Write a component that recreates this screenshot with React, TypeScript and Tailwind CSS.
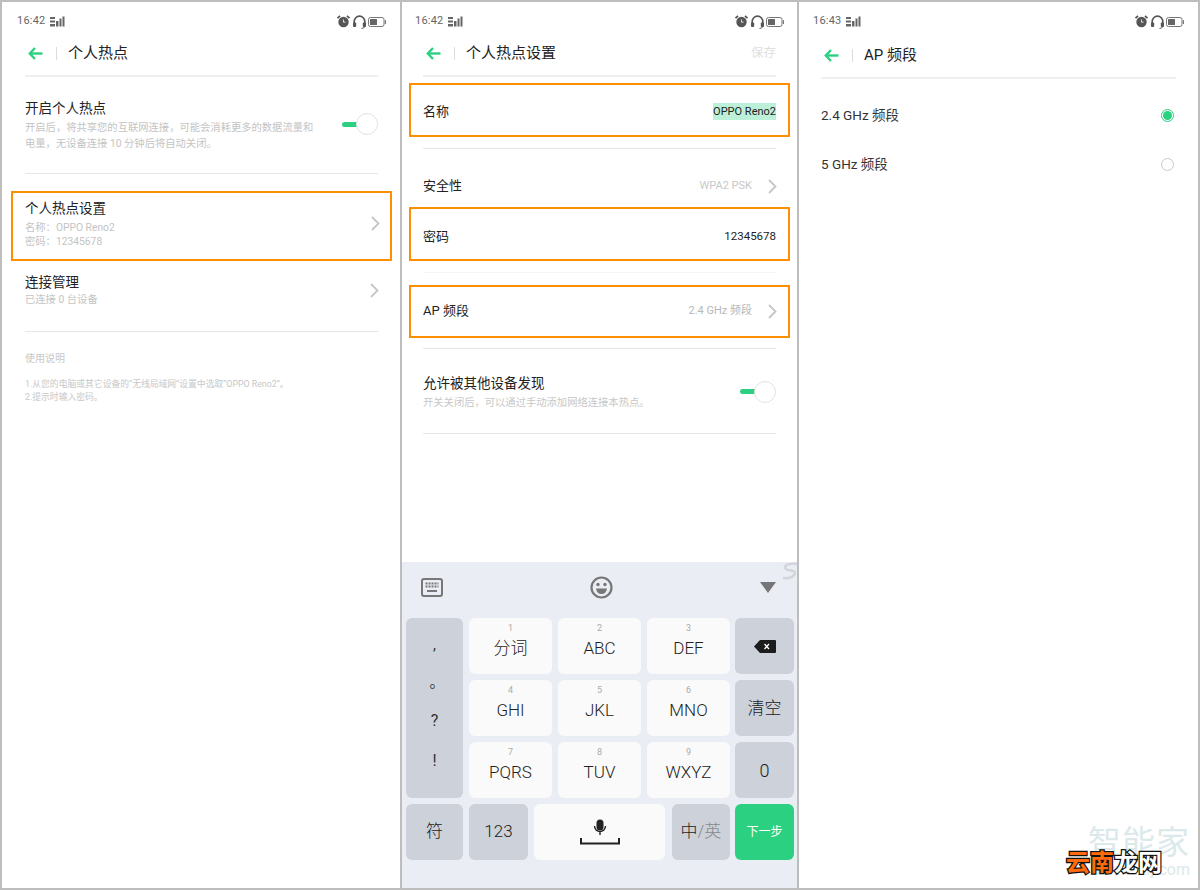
import type { ReactNode } from 'react'

const FONT = { fontFamily: 'Roboto, "Noto Sans CJK SC", sans-serif' }

function SignalIcon() {
  return (
    <svg width="15" height="11" viewBox="0 0 15 11" fill="#666">
      <rect x="0" y="1" width="5" height="2" />
      <rect x="0" y="4.5" width="5" height="2" />
      <rect x="0" y="8" width="5" height="2.5" />
      <rect x="6" y="5" width="2.5" height="5.5" />
      <rect x="9.5" y="2.5" width="2" height="8" />
      <rect x="12.5" y="0.5" width="2" height="10" />
    </svg>
  )
}

function AlarmIcon() {
  return (
    <svg width="13" height="13" viewBox="0 0 13 13">
      <circle cx="6.5" cy="7" r="5.2" fill="#555" />
      <path d="M0.5 3.2 L3 0.8 M12.5 3.2 L10 0.8" stroke="#555" strokeWidth="1.8" />
      <path d="M6.5 4.5 V7.2 H8.5" stroke="#ddd" strokeWidth="1" fill="none" />
    </svg>
  )
}

function HeadsetIcon() {
  return (
    <svg width="13" height="14" viewBox="0 0 13 14" fill="none">
      <path d="M1.2 9 V6.5 a5.3 5.3 0 0 1 10.6 0 V9" stroke="#555" strokeWidth="1.7" />
      <rect x="0" y="7.5" width="3.2" height="4.5" rx="1" fill="#555" />
      <rect x="9.8" y="7.5" width="3.2" height="4.5" rx="1" fill="#555" />
      <path d="M11.5 12 Q11 13.4 8.5 13.4" stroke="#555" strokeWidth="1" />
    </svg>
  )
}

function BatteryIcon() {
  return (
    <svg width="18" height="10" viewBox="0 0 18 10" fill="none">
      <rect x="0.5" y="0.5" width="15.5" height="9" rx="2" stroke="#777" />
      <rect x="2" y="2" width="7" height="6" rx="0.5" fill="#666" />
      <rect x="16.8" y="3" width="1.2" height="4" rx="0.5" fill="#777" />
    </svg>
  )
}

function StatusBar({ time }: { time: string }) {
  return (
    <div className="h-[38px] flex items-center justify-between pt-[1px]">
      <div className="flex items-center gap-[5px] text-[11px] text-[#666] tracking-[0.2px]">
        <span>{time}</span>
        <SignalIcon />
      </div>
      <div className="flex items-center">
        <AlarmIcon />
        <span className="ml-[3px] flex"><HeadsetIcon /></span>
        <span className="ml-[2px] flex"><BatteryIcon /></span>
      </div>
    </div>
  )
}

function BackArrow() {
  return (
    <svg width="15" height="13" viewBox="0 0 15 13" fill="none" stroke="#2bd181" strokeWidth="2.4">
      <path d="M14.5 6.5 H2" />
      <path d="M7 1 L1.8 6.5 L7 12" />
    </svg>
  )
}

function Header({ title, right, className }: { title: string; right?: string; className?: string }) {
  return (
    <div className={`h-[26px] flex items-center ${className ?? ''}`}>
      <span className="ml-[3px] flex"><BackArrow /></span>
      <span className="ml-[13px] w-[1px] h-[13px] bg-[#dcdcdc]" />
      <span className="ml-[11px] text-[15px] text-[#222]">{title}</span>
      {right && <span className="ml-auto text-[12.5px] text-[#dedede]">{right}</span>}
    </div>
  )
}

function Chevron() {
  return (
    <svg className="-mr-[1px]" width="9" height="15" viewBox="0 0 9 15" fill="none" stroke="#c6c6c6" strokeWidth="1.8">
      <path d="M1 1 L7.5 7.5 L1 14" />
    </svg>
  )
}

function Toggle({ className }: { className?: string }) {
  return (
    <div className={`flex items-center shrink-0 ${className ?? ''}`}>
      <div className="w-[15px] h-[5px] rounded-l-full bg-[#2bd181]" />
      <div className="w-[22px] h-[22px] rounded-full border border-[#e4e4e4] bg-white -ml-[1px]" />
    </div>
  )
}

function Divider({ className }: { className?: string }) {
  return <div className={`h-[1px] bg-[#e6e6e6] ${className ?? ''}`} />
}

function Radio({ checked }: { checked?: boolean }) {
  if (checked) {
    return (
      <div className="w-[13px] h-[13px] rounded-full border border-[#2bd181] flex items-center justify-center">
        <div className="w-[9px] h-[9px] rounded-full bg-[#2bd181]" />
      </div>
    )
  }
  return <div className="w-[13px] h-[13px] rounded-full border border-[#c8c8c8]" />
}

function HotspotPanel() {
  return (
    <div className="w-[398px] h-full shrink-0 bg-white pl-[15px] pr-[14px]">
      <StatusBar time="16:42" />
      <div className="ml-[8px] mr-[8px]">
        <Header title="个人热点" />
        <div className="mt-[9px] h-[2px] bg-[#efefef]" />

        <div className="mt-[21px] flex items-center justify-between">
          <div>
            <div className="h-[20px] leading-[20px] text-[13.5px] text-[#222]">开启个人热点</div>
            <div className="mt-[2px] text-[10.3px] leading-[16px] text-[#c4c4c4]">
              <div>开启后，将共享您的互联网连接，可能会消耗更多的数据流量和</div>
              <div>电量，无设备连接 10 分钟后将自动关闭。</div>
            </div>
          </div>
          <Toggle className="-mt-[2px]" />
        </div>
        <Divider className="mt-[21px]" />

        <div className="mt-[17px] -mx-[14px] h-[70px] border-2 border-[#ff8f00] pl-[12px] pr-[11px] flex items-center justify-between">
          <div className="-mt-[3px]">
            <div className="h-[16px] leading-[16px] text-[13.5px] text-[#222]">个人热点设置</div>
            <div className="mt-[5px] text-[10.3px] leading-[14px] text-[#c4c4c4]">
              <div>名称：OPPO Reno2</div>
              <div>密码：12345678</div>
            </div>
          </div>
          <span className="-mt-[6px] flex"><Chevron /></span>
        </div>

        <div className="mt-[12px] flex items-center justify-between">
          <div>
            <div className="h-[18px] leading-[18px] text-[13.5px] text-[#222]">连接管理</div>
            <div className="mt-[2px] h-[14px] leading-[14px] text-[10.3px] text-[#c4c4c4]">已连接 0 台设备</div>
          </div>
          <Chevron />
        </div>
        <Divider className="mt-[24px]" />

        <div className="mt-[20px] h-[14px] leading-[14px] text-[10px] text-[#c8c8c8]">使用说明</div>
        <div className="mt-[12px] text-[8.8px] leading-[13px] text-[#c8c8c8]">
          <div>1.从您的电脑或其它设备的“无线局域网”设置中选取“OPPO Reno2”。</div>
          <div>2.提示时输入密码。</div>
        </div>
      </div>
    </div>
  )
}

function Key({ digit, label }: { digit: string; label: string }) {
  return (
    <div className="rounded-md bg-[#fafafa] flex flex-col items-center pt-[5px]">
      <span className="h-[11px] leading-[11px] text-[9px] text-[#aaa]">{digit}</span>
      <span className="mt-[2px] h-[24px] leading-[24px] text-[17px] font-light text-[#222]">{label}</span>
    </div>
  )
}

function GrayKey({ children, className }: { children: ReactNode; className?: string }) {
  return (
    <div className={`rounded-md bg-[#cdd1da] flex items-center justify-center text-[17px] font-light text-[#222] ${className ?? ''}`}>
      {children}
    </div>
  )
}

function Keyboard() {
  return (
    <div className="relative mt-auto h-[326px] bg-[#eaedf3] pl-[4px] pr-[3px] overflow-hidden">
      <svg className="absolute right-0 top-0" width="14" height="18" viewBox="0 0 14 18" fill="none" stroke="#d2d6dc" strokeWidth="2.6">
        <path d="M15 2 Q3 1 2 5 Q2 8 8 8.5 Q14 9 11 13 Q8 17 0 16" />
      </svg>
      <div className="h-[56px] pb-[6px] flex items-center justify-between pl-[15px] pr-[18px]">
        <svg width="22" height="19" viewBox="0 0 22 19" fill="none">
          <rect x="1" y="1" width="20" height="17" rx="2" stroke="#777" strokeWidth="2" fill="#eaedf3" />
          <path d="M4.5 5.5 H17.5 M4.5 8.5 H17.5" stroke="#777" strokeWidth="2" strokeDasharray="2 1" />
          <path d="M6 13 H16" stroke="#777" strokeWidth="2" />
        </svg>
        <svg width="23" height="23" viewBox="0 0 23 23" fill="none">
          <circle cx="11.5" cy="11.5" r="10" stroke="#777" strokeWidth="2.2" />
          <circle cx="8" cy="8.5" r="1.7" fill="#777" />
          <circle cx="15" cy="8.5" r="1.7" fill="#777" />
          <path d="M6 12.5 H17 Q16 18 11.5 18 Q7 18 6 12.5 Z" fill="#777" />
        </svg>
        <svg width="16" height="11" viewBox="0 0 16 11">
          <path d="M0 0 H16 L8 11 Z" fill="#777" />
        </svg>
      </div>

      <div className="grid grid-cols-[57px_83px_83px_83px_58px] grid-rows-[56px_56px_56px] gap-[6px]">
        <div className="row-span-3 rounded-md bg-[#cdd1da] text-[#333] relative">
          <span className="absolute left-0 right-0 top-[17px] text-center text-[15px] leading-[20px]">,</span>
          <span className="absolute left-[5px] right-0 top-[54px] text-center text-[15px] leading-[20px]">。</span>
          <span className="absolute left-0 right-0 top-[91px] text-center text-[16px] leading-[24px]">?</span>
          <span className="absolute left-0 right-0 top-[131px] text-center text-[16px] leading-[24px]">!</span>
        </div>
        <Key digit="1" label="分词" />
        <Key digit="2" label="ABC" />
        <Key digit="3" label="DEF" />
        <GrayKey className="-ml-[1px]">
          <svg width="22" height="13" viewBox="0 0 22 13">
            <path d="M6 0 H21 a1 1 0 0 1 1 1 V12 a1 1 0 0 1 -1 1 H6 L0 6.5 Z" fill="#1c1c1c" />
            <path d="M10.5 4 L15 9 M15 4 L10.5 9" stroke="#fff" strokeWidth="1.3" />
          </svg>
        </GrayKey>
        <Key digit="4" label="GHI" />
        <Key digit="5" label="JKL" />
        <Key digit="6" label="MNO" />
        <GrayKey className="-ml-[1px] pt-[2px]">清空</GrayKey>
        <Key digit="7" label="PQRS" />
        <Key digit="8" label="TUV" />
        <Key digit="9" label="WXYZ" />
        <GrayKey className="-ml-[1px] pt-[1px] text-[18px]">0</GrayKey>
      </div>

      <div className="mt-[6px] h-[56px] flex">
        <GrayKey className="w-[57px]">符</GrayKey>
        <GrayKey className="ml-[6px] w-[59px]">123</GrayKey>
        <div className="ml-[6px] w-[131px] rounded-md bg-[#fafafa] flex items-center justify-center">
          <svg width="40" height="26" viewBox="0 0 40 26" fill="none">
            <rect x="16.5" y="0.5" width="7" height="11" rx="3.5" fill="#222" />
            <path d="M14.5 7 a5.5 5.5 0 0 0 11 0 M20 13 V16" stroke="#222" strokeWidth="1.4" />
            <path d="M1 19 V24.5 H39 V19" stroke="#222" strokeWidth="2" />
          </svg>
        </div>
        <GrayKey className="ml-[7px] w-[58px]">
          中<span className="text-[#888]">/英</span>
        </GrayKey>
        <div className="ml-[5px] w-[59px] rounded-md bg-[#2bd181] flex items-center justify-center text-[12px] text-white">
          下一步
        </div>
      </div>
    </div>
  )
}

function SettingsPanel() {
  return (
    <div className="w-[395px] h-full shrink-0 bg-white flex flex-col">
      <div className="px-[13px]">
        <StatusBar time="16:42" />
        <div className="mx-[8px]">
          <Header title="个人热点设置" right="保存" />
          <div className="mt-[9px] h-[2px] bg-[#efefef]" />

          <div className="mt-[6px] -mx-[14px] h-[54px] border-2 border-[#ff8f00] pl-[12px] pr-[12px] pt-[2px] flex items-center justify-between">
            <span className="pt-[1px] text-[13px] text-[#222]">名称</span>
            <span className="h-[17px] leading-[17px] bg-[#bdf0d8] text-[11px] text-[#222]">OPPO Reno2</span>
          </div>
          <Divider className="mt-[11px]" />

          <div className="mt-[15px] h-[43px] pt-[1px] flex items-center justify-between">
            <span className="text-[13px] text-[#222]">安全性</span>
            <span className="flex items-center gap-[16px] text-[11px] text-[#c8c8c8]">
              WPA2 PSK
              <Chevron />
            </span>
          </div>

          <div className="-mx-[14px] h-[54px] border-2 border-[#ff8f00] pl-[12px] pr-[12px] pt-[6px] flex items-center justify-between">
            <span className="text-[13px] text-[#222]">密码</span>
            <span className="text-[11.5px] text-[#222]">12345678</span>
          </div>
          <div className="mt-[11px] h-[1px] bg-[#f6f6f6]" />

          <div className="mt-[12px] -mx-[14px] h-[53px] border-2 border-[#ff8f00] pl-[12px] pr-[12px] flex items-center justify-between">
            <span className="pb-[1px] text-[13px] text-[#222]">AP 频段</span>
            <span className="flex items-center gap-[16px] text-[11px] text-[#b8b8b8]">
              2.4 GHz 频段
              <Chevron />
            </span>
          </div>
          <Divider className="mt-[10px]" />

          <div className="mt-[25px] flex items-center justify-between">
            <div>
              <div className="h-[18px] leading-[18px] text-[13.5px] text-[#222]">允许被其他设备发现</div>
              <div className="mt-[3px] h-[16px] leading-[16px] text-[10.3px] text-[#c8c8c8]">开关关闭后，可以通过手动添加网络连接本热点。</div>
            </div>
            <Toggle className="-mt-[2px]" />
          </div>
          <Divider className="mt-[22px]" />
        </div>
      </div>
      <Keyboard />
    </div>
  )
}

function BandPanel() {
  return (
    <div className="relative flex-1 h-full bg-white overflow-hidden">
      <div className="pl-[14px] pr-[14px]">
        <StatusBar time="16:43" />
        <div className="mx-[8px]">
          <Header title="AP 频段" className="mt-[2px]" />
          <div className="mt-[9px] h-[2px] bg-[#efefef]" />
          <div className="mt-[26px] h-[20px] flex items-center justify-between pr-[2px] text-[13.5px] text-[#333]">
            2.4 GHz 频段
            <Radio checked />
          </div>
          <div className="mt-[29px] h-[20px] flex items-center justify-between pr-[2px] text-[13.5px] text-[#333]">
            5 GHz 频段
            <Radio />
          </div>
        </div>
      </div>

      <div className="absolute right-[8px] bottom-[29px] text-[33px] leading-[33px] tracking-[1px] text-[#dbe9eb]">智能家</div>
      <div className="absolute right-[8px] bottom-[10px] text-[16px] leading-[16px] text-[#dbe9eb]">www.zhij.com</div>
      <div className="absolute left-[267px] bottom-[11px] text-[24px] leading-[28px] font-bold [-webkit-text-stroke:2.5px_#111] [paint-order:stroke_fill]">
        <span className="text-[#ff6a0d]">云南</span>
        <span className="text-white">龙网</span>
      </div>
    </div>
  )
}

export default function App() {
  return (
    <div className="w-[1200px] h-[890px] bg-[#bdbdbd] p-[2px] flex gap-[2px] overflow-hidden" style={FONT}>
      <HotspotPanel />
      <SettingsPanel />
      <BandPanel />
    </div>
  )
}
